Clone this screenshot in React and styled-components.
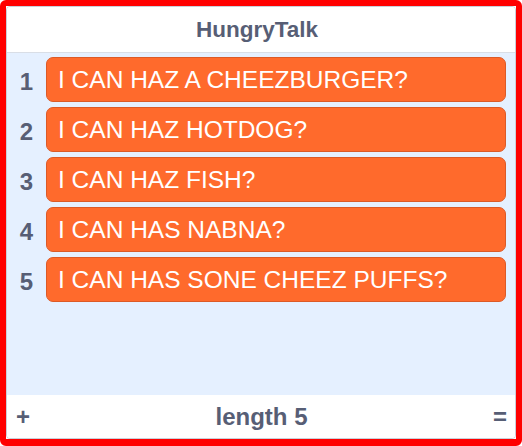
import React from 'react'
import styled, { createGlobalStyle } from 'styled-components'

const GlobalStyle = createGlobalStyle`
  html, body {
    margin: 0;
    padding: 0;
    background: #ffffff;
  }
  body {
    font-family: "Liberation Sans", Arial, Helvetica, sans-serif;
  }
`

const Highlight = styled.div`
  box-sizing: border-box;
  width: 522px;
  height: 446px;
  border: 6px solid #ff0000;
  border-bottom-width: 7px;
  border-radius: 6px;
  display: flex;
`

const Monitor = styled.div`
  flex: 1;
  display: flex;
  flex-direction: column;
  border: 1px solid #c9d0da;
  border-radius: 4px;
  overflow: hidden;
  color: #575e75;
`

const Header = styled.div`
  height: 45px;
  flex: none;
  display: flex;
  align-items: center;
  justify-content: center;
  padding-right: 8px;
  background: #ffffff;
  border-bottom: 1px solid #d9dee6;
  font-size: 22.5px;
  font-weight: bold;
`

const Body = styled.div`
  flex: 1;
  display: flex;
  flex-direction: column;
  gap: 5px;
  padding: 4px 9px 0 0;
  background: #e5f0ff;
`

const Row = styled.div`
  display: flex;
  align-items: center;
  height: 45px;
`

const Index = styled.div`
  width: 39px;
  flex: none;
  padding-top: 5px;
  text-align: center;
  font-size: 24px;
  font-weight: bold;
  color: #575e75;
`

const Item = styled.div`
  flex: 1;
  box-sizing: border-box;
  height: 45px;
  display: flex;
  align-items: center;
  padding: 0 11px;
  background: #ff6a2c;
  border: 1px solid #dc5a27;
  border-radius: 7px;
  color: #ffffff;
  font-size: 24.5px;
  white-space: nowrap;
  overflow: hidden;
`

const Footer = styled.div`
  height: 43px;
  flex: none;
  display: flex;
  align-items: center;
  justify-content: space-between;
  padding: 0 7px 0 8px;
  background: #ffffff;
  font-weight: bold;
`

const FooterButton = styled.span`
  width: 16px;
  text-align: center;
  font-size: 24px;
`

const Length = styled.span`
  font-size: 24px;
`

const items = [
  'I CAN HAZ A CHEEZBURGER?',
  'I CAN HAZ HOTDOG?',
  'I CAN HAZ FISH?',
  'I CAN HAS NABNA?',
  'I CAN HAS SONE CHEEZ PUFFS?',
]

export default function App() {
  return (
    <>
      <GlobalStyle />
      <Highlight>
        <Monitor>
          <Header>HungryTalk</Header>
          <Body>
            {items.map((text, i) => (
              <Row key={i}>
                <Index>{i + 1}</Index>
                <Item>{text}</Item>
              </Row>
            ))}
          </Body>
          <Footer>
            <FooterButton>+</FooterButton>
            <Length>length {items.length}</Length>
            <FooterButton>=</FooterButton>
          </Footer>
        </Monitor>
      </Highlight>
    </>
  )
}
